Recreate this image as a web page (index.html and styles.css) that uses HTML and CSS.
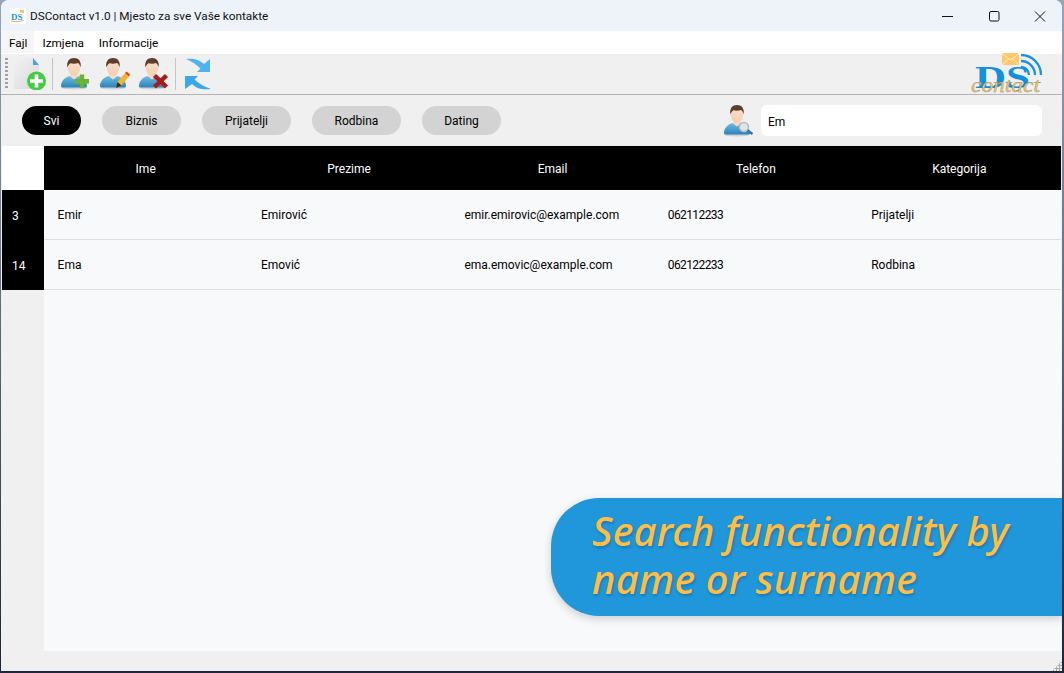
FILE: index.html
```html
<!DOCTYPE html>
<html lang="en">
<head>
  <meta charset="UTF-8">
  <meta name="viewport" content="width=device-width, initial-scale=1.0">
  <title>DSContact v1.0</title>
  <link rel="stylesheet" href="styles.css">
</head>
<body>
  <svg class="defs" width="0" height="0">
    <defs>
      <linearGradient id="shirt" x1="0" y1="0" x2="0" y2="1">
        <stop offset="0" stop-color="#6fbde6"/>
        <stop offset="1" stop-color="#2b82b8"/>
      </linearGradient>
      <linearGradient id="skin" x1="0" y1="0" x2="0" y2="1">
        <stop offset="0" stop-color="#f9e0cc"/>
        <stop offset="1" stop-color="#f3cfb3"/>
      </linearGradient>
      <linearGradient id="page" x1="0" y1="0" x2="1" y2="1">
        <stop offset="0" stop-color="#f2f2f2"/>
        <stop offset="1" stop-color="#d9d9d9"/>
      </linearGradient>
      <symbol id="person" viewBox="0 0 32 32">
        <ellipse cx="14" cy="29.800" rx="13" ry="1.600" fill="#cfd2d4"/>
        <path d="M1 28c0-5 4-9 9-10l4 2 4-2c5 1 9 5 9 10 0 1-1 1.500-2 1.500H3c-1 0-2-.5-2-1.500z" fill="url(#shirt)"/>
        <path d="M10 15h8v3.500L14 21.500l-4-3z" fill="#f6dac3"/>
        <ellipse cx="14" cy="9.500" rx="6.300" ry="8" fill="url(#skin)"/>
        <path d="M7.300 9.500C6.500 3 9.500 0 14 0s7.500 3 6.700 9.500c-.5-2-1.300-3.500-2.700-4.500-2 1-5.500 1-7.500.3-1.500 1-2.600 2.600-3.200 4.200z" fill="#5e3d2a"/>
      </symbol>
    </defs>
  </svg>

  <div class="window">
    <header class="titlebar">
      <svg class="app-icon" viewBox="0 0 16 16" width="16" height="16">
        <rect width="16" height="16" fill="#fff"/>
        <text x="1" y="12" class="app-icon-text">DS</text>
        <rect x="10" y="2" width="4" height="3" fill="#f5c56b"/>
        <path d="M1 13c4 1 9 1 13-1" stroke="#d8b368" fill="none"/>
      </svg>
      <span class="title">DSContact v1.0 | Mjesto za sve Vaše kontakte</span>
      <div class="win-buttons">
        <svg viewBox="0 0 46 30" width="46" height="30"><path d="M18 15.500h11" stroke="#111" fill="none"/></svg>
        <svg viewBox="0 0 46 30" width="46" height="30"><rect x="19.500" y="10.500" width="9.500" height="9.500" rx="1.500" stroke="#111" fill="none"/></svg>
        <svg viewBox="0 0 46 30" width="46" height="30"><path d="M19 10.500l10 10m0-10l-10 10" stroke="#111" fill="none"/></svg>
      </div>
    </header>

    <nav class="menubar">
      <span class="menu-item is-open">Fajl</span>
      <span class="menu-item">Izmjena</span>
      <span class="menu-item">Informacije</span>
    </nav>

    <div class="toolbar">
      <span class="grip"></span>
      <button class="tool">
        <svg viewBox="0 0 32 32" width="32" height="32">
          <path d="M0 0h19v7h6v24H0z" fill="url(#page)"/>
          <path d="M19 0v7h6z" fill="#4f9fd8"/>
          <circle cx="22.500" cy="23" r="9.500" fill="#44cc44"/>
          <path d="M22.500 16.500v13m-6.500-6.500h13" stroke="#fff" stroke-width="3.600" fill="none"/>
        </svg>
      </button>
      <span class="tool-sep"></span>
      <button class="tool">
        <svg viewBox="0 0 32 32" width="32" height="32">
          <use href="#person"/>
          <path d="M22 16.500v13.500m-7-6.800h14" stroke="#6cb52d" stroke-width="4.500" fill="none"/>
        </svg>
      </button>
      <button class="tool">
        <svg viewBox="0 0 32 32" width="32" height="32">
          <use href="#person"/>
          <path d="M17 30l1.500-6 7.500-9 4 3.500-7.500 9z" fill="#f4b52e"/>
          <path d="M17 30l1.500-6 4 3.500z" fill="#2e2a25"/>
          <path d="M26 15l1.500-1.500 3.500 3-1 2z" fill="#d6402a"/>
        </svg>
      </button>
      <button class="tool">
        <svg viewBox="0 0 32 32" width="32" height="32">
          <use href="#person"/>
          <path d="M16.500 17.500l12 11.500m0-11.500l-12 11.500" stroke="#a81c1c" stroke-width="4.500" fill="none"/>
        </svg>
      </button>
      <span class="tool-sep tool-sep-last"></span>
      <button class="tool tool-refresh">
        <svg viewBox="0 0 29 32" width="29" height="32">
          <path d="M2 1C8 0 15 1 20 6l6-5v13H13l3.500-3.500C12 6 7 3 2 1z" fill="#4fb3ec"/>
          <path d="M27 31c-7 1-14 0-19-5l-7 5V18h13l-3.500 3.500C15 26 21 29 27 31z" fill="#3aa8e8"/>
        </svg>
      </button>
      <svg class="logo" viewBox="0 0 72 42" width="72" height="42">
        <rect x="32" y="0" width="17" height="12" rx="1.500" fill="#fdc76a"/>
        <path d="M32.500 1l8 6 8-6M32.500 11.500l6-5.500m10 5.500l-6-5.500" stroke="#fff0cf" fill="none"/>
        <g stroke="#1c93d9" stroke-width="2.300" fill="none">
          <path d="M51 2a20 20 0 0 1 20 20"/>
          <path d="M51 8a14 14 0 0 1 14 14"/>
          <path d="M51 14a8 8 0 0 1 8 8"/>
        </g>
        <text x="5" y="35" class="logo-ds" textLength="55" lengthAdjust="spacingAndGlyphs">DS</text>
        <text x="1" y="39" class="logo-contact" textLength="69" lengthAdjust="spacingAndGlyphs">contact</text>
      </svg>
    </div>

    <div class="filters">
      <button class="pill is-active pill-svi">Svi</button>
      <button class="pill pill-md">Biznis</button>
      <button class="pill pill-lg">Prijatelji</button>
      <button class="pill pill-lg">Rodbina</button>
      <button class="pill pill-md">Dating</button>
      <svg class="search-icon" viewBox="0 0 32 32" width="32" height="32">
        <use href="#person"/>
        <circle cx="21" cy="22" r="4.500" fill="#dfe6ea" stroke="#b5bdc2" stroke-width="1.600"/>
        <path d="M24.500 25.500l5 3.500" stroke="#2379b0" stroke-width="2.500"/>
      </svg>
      <input class="search" type="text" value="Em">
    </div>

    <div class="table">
      <div class="row-heads">
        <div class="corner"></div>
        <div class="row-head">3</div>
        <div class="row-head">14</div>
      </div>
      <div class="table-view">
        <div class="head-row">
          <span>Ime</span><span>Prezime</span><span>Email</span><span>Telefon</span><span>Kategorija</span>
        </div>
        <div class="data-row">
          <span>Emir</span><span>Emirović</span><span>emir.emirovic@example.com</span><span class="phone">062112233</span><span>Prijatelji</span>
        </div>
        <div class="data-row">
          <span>Ema</span><span>Emović</span><span>ema.emovic@example.com</span><span class="phone">062122233</span><span>Rodbina</span>
        </div>
      </div>
    </div>

    <div class="statusbar"><span class="size-grip"></span></div>

    <div class="callout">Search functionality by<br>name or surname</div>
  </div>
</body>
</html>
```

FILE: styles.css
```css
* {
  box-sizing: border-box;
}
html, body {
  margin: 0;
  height: 100%;
  overflow: hidden;
}
body {
  background: linear-gradient(#93a7bb, #1c2440);
  font-family: Roboto, Arial, sans-serif;
  font-size: 12px;
  color: #000;
}
.defs {
  position: absolute;
}
.window {
  position: relative;
  display: flex;
  flex-direction: column;
  width: 1061px;
  height: 671px;
  margin-left: 1px;
  background: #f0f0f0;
  border-radius: 8px 8px 0 0;
  overflow: hidden;
}

.titlebar {
  display: flex;
  align-items: center;
  height: 31px;
  padding-left: 9px;
  background: #eef3f9;
}
.app-icon {
  margin-right: 4px;
}
.app-icon-text {
  font-family: "Liberation Serif", serif;
  font-weight: bold;
  font-size: 9px;
  fill: #1c93d9;
}
.title {
  font-size: 11.75px;
  color: #111;
}
.win-buttons {
  display: flex;
  margin-left: auto;
  height: 30px;
}

.menubar {
  display: flex;
  height: 22px;
  background: #fff;
  align-items: stretch;
}
.menu-item {
  display: flex;
  align-items: center;
  padding: 1px 7px 0 8px;
  font-size: 11.8px;
}
.menu-item.is-open {
  background: #f5f5f5;
}

.toolbar {
  display: flex;
  align-items: center;
  height: 42px;
  padding-left: 4px;
  background: #f0f0f0;
  border-top: 1px solid #fff;
  border-bottom: 1px solid #b4b4b4;
}
.grip {
  width: 3px;
  height: 32px;
  margin-right: 6px;
  background: repeating-linear-gradient(#a0a0a0 0 2px, transparent 2px 4px);
}
.tool {
  display: flex;
  padding: 0;
  border: 0;
  background: none;
  margin-right: 7px;
}
.tool-sep {
  width: 1px;
  height: 32px;
  margin: 0 7px 0 -1px;
  background: #c6c6c6;
}
.tool-sep-last {
  margin-left: -2px;
}
.tool-refresh {
  margin-left: 1px;
}
.logo {
  align-self: flex-start;
  margin: -1px 20px 0 auto;
  overflow: visible;
}
.logo-ds {
  font-family: "Liberation Serif", serif;
  font-weight: bold;
  font-size: 32px;
  fill: #1290dc;
}
.logo-contact {
  font-family: "Liberation Serif", serif;
  font-style: italic;
  font-size: 20px;
  fill: #e8c67c;
  stroke: #7d6a44;
  stroke-width: .25px;
}

.filters {
  display: flex;
  align-items: center;
  height: 51px;
  padding: 0 20px 0 21px;
}
.pill {
  height: 29px;
  margin-right: 21px;
  padding: 1px 0 0;
  border: 0;
  border-radius: 15px;
  background: #d3d3d3;
  color: #000;
  font-family: inherit;
  font-size: inherit;
}
.pill.is-active {
  background: #000;
  color: #fff;
}
.pill-svi {
  width: 59px;
}
.pill-md {
  width: 79px;
}
.pill-lg {
  width: 89px;
}
.search-icon {
  margin-left: auto;
  margin-right: 6px;
}
.search {
  width: 281px;
  height: 31px;
  padding: 2px 7px 0;
  border: 0;
  border-radius: 6px;
  background: #fff;
  color: #000;
  font-family: inherit;
  font-size: inherit;
}

.table {
  display: flex;
  height: 505px;
  padding: 0 1px;
}
.row-heads {
  width: 42px;
  background: #f0f0f0;
}
.corner {
  height: 44px;
  background: #fff;
}
.row-head {
  display: flex;
  align-items: center;
  height: 50px;
  padding: 1px 0 0 10px;
  background: #000;
  color: #fff;
}
.table-view {
  flex: 1;
  background: #f8f9fb;
}
.head-row,
.data-row {
  display: grid;
  grid-template-columns: repeat(5, 1fr);
  align-items: center;
}
.head-row {
  height: 44px;
  padding-top: 2px;
  background: #000;
  color: #fff;
  text-align: center;
}
.data-row {
  height: 50px;
  padding-top: 1px;
  border-bottom: 1px solid #dcdfe4;
}
.data-row span {
  padding-left: 13.6px;
}
.data-row .phone {
  letter-spacing: -.6px;
}

.statusbar {
  flex: 1;
  position: relative;
}
.size-grip {
  position: absolute;
  right: 0;
  bottom: 0;
  width: 10px;
  height: 10px;
  background: radial-gradient(circle, #a8a8a8 1.2px, transparent 1.2px) 0 0 / 3px 3px;
  clip-path: polygon(100% 0, 100% 100%, 0 100%);
}

.callout {
  position: absolute;
  left: 550px;
  right: 0;
  top: 498px;
  height: 118px;
  padding: 9px 0 0 41px;
  background: #2097db;
  border-radius: 48px 0 0 48px;
  box-shadow: 0 3px 8px rgba(0, 0, 0, .18);
  color: #ffbd44;
  font-family: "Noto Sans", sans-serif;
  font-size: 40px;
  font-style: italic;
  font-weight: 500;
  letter-spacing: .2px;
  line-height: 48px;
  text-shadow: 1px 2px 3px rgba(0, 0, 0, .2);
}
```
